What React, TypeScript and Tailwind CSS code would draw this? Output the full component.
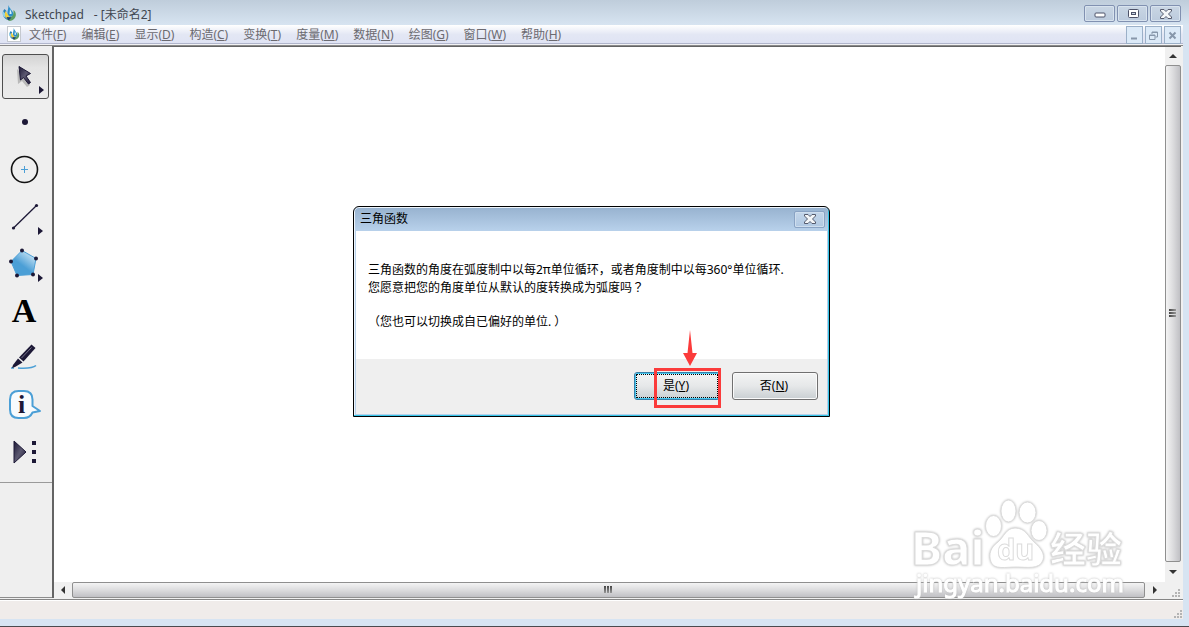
import type { ReactNode } from "react";

const menus = [
  { label: "文件", hotkey: "F" },
  { label: "编辑", hotkey: "E" },
  { label: "显示", hotkey: "D" },
  { label: "构造", hotkey: "C" },
  { label: "变换", hotkey: "T" },
  { label: "度量", hotkey: "M" },
  { label: "数据", hotkey: "N" },
  { label: "绘图", hotkey: "G" },
  { label: "窗口", hotkey: "W" },
  { label: "帮助", hotkey: "H" },
];

function AppIcon({ className }: { className: string }) {
  return (
    <svg viewBox="1 0 14 16" className={className} aria-hidden="true">
      <path d="M3 4 C0 7 1 13 6 15 L8 12 C4 11 4 8 5 6 Z" fill="#2c7fb8" />
      <path d="M1.500 6 L4 9 L4 13 C1 11 .5 9 1.500 6 Z" fill="#8fd0ec" />
      <path d="M7 0 C8 4 12 6 12 9 C12 12 8 13 6 10 C5.500 6 7 4 7 0 Z" fill="#2d8fc9" />
      <path d="M8.500 4 C9 6 10.500 7 10 9 L8 9 Z" fill="#d8eef8" />
      <path d="M4 6 L8 12 L6 14 C3 12 3 9 4 6 Z" fill="#f1cf3a" />
      <path d="M12 5 C16 8 15 15 8 16 L5 14 L8 12 C12 12 12 9 12 5 Z" fill="#5d9e62" />
      <path d="M5 12 L10 12.500 L7 15.500 Z" fill="#1d3f73" />
    </svg>
  );
}

function TitleBar() {
  const button =
    "flex h-[17px] w-[31px] items-center justify-center rounded-xs border border-[#8191b1] bg-linear-to-b from-[#c9d6e4] to-[#bccbdd] shadow-[inset_0_0_0_1px_#d8e3ee]";
  return (
    <header className="flex h-[25px] shrink-0 items-center bg-linear-to-b from-[#bfcddb] to-[#d7e4f1] pr-2 text-[12px] text-[#3f4650]">
      <AppIcon className="ml-0.5 h-4 w-[15px]" />
      <h1 className="ml-2 flex gap-2.5 pt-1 whitespace-pre">
        <span>Sketchpad</span>
        <span>- [未命名2]</span>
      </h1>
      <div className="ml-auto flex gap-0.5 pt-0.5">
        <button className={button} aria-label="最小化">
          <svg width="12" height="11">
            <rect x="1" y="5" width="10" height="4" rx="1" fill="#fff" stroke="#4d5268" />
          </svg>
        </button>
        <button className={button} aria-label="还原">
          <svg width="12" height="11">
            <rect x="1.500" y="1.500" width="10" height="8" rx="1" fill="#fff" stroke="#4d5268" />
            <rect x="4.500" y="4.500" width="4" height="2" fill="#c9d6e4" stroke="#4d5268" />
          </svg>
        </button>
        <button className={button} aria-label="关闭">
          <CloseCross />
        </button>
      </div>
    </header>
  );
}

function CloseCross() {
  return (
    <svg width="12" height="10" viewBox="0 0 12 10">
      <path
        d="M.5 .5 H4 L6 2.500 L8 .5 H11.500 V2 L8.500 5 L11.500 8 V9.500 H8 L6 7.500 L4 9.500 H.5 V8 L3.500 5 L.5 2 Z"
        fill="#f4f6f8"
        stroke="#555a6c"
      />
    </svg>
  );
}

function MenuBar() {
  const button =
    "flex h-[18px] w-[17px] items-center justify-center border border-[#9bb0c8] bg-[#dceaf8]";
  return (
    <div className="flex h-5 shrink-0 items-start border-b border-[#f2f2f4] bg-linear-to-b from-white via-[#e3e7f4] to-[#dfe3f4] text-[12px] text-[#6b6a70] shadow-[inset_0_-1px_0_#b1b6cc]">
      <span className="mt-px ml-[7px] flex h-4 w-[14px] items-center justify-center border border-[#c5c9cf] bg-white">
        <AppIcon className="h-3 w-[11px]" />
      </span>
      <nav className="ml-2 flex gap-[15px]">
        {menus.map((menu) => (
          <button key={menu.hotkey} className="h-[19px] leading-[20px]">
            {menu.label}(<u>{menu.hotkey}</u>)
          </button>
        ))}
      </nav>
      <div className="mt-px mr-0.5 ml-auto flex gap-0.5">
        <button className={button} aria-label="最小化文档">
          <svg width="9" height="9">
            <path d="M1 7.500 H7" stroke="#8797ab" strokeWidth="2" />
          </svg>
        </button>
        <button className={button} aria-label="还原文档">
          <svg width="9" height="9" fill="none" stroke="#8797ab">
            <path d="M3 3 V1 H8.500 V6 H6.500 M3 1.500 H8.500" />
            <path d="M.5 4 H6 V8.500 H.5 Z M.5 4.500 H6" />
          </svg>
        </button>
        <button className={button} aria-label="关闭文档">
          <svg width="9" height="9">
            <path d="M1.500 1.500 L7.500 7.500 M7.500 1.500 L1.500 7.500" stroke="#8797ab" strokeWidth="2" />
          </svg>
        </button>
      </div>
    </div>
  );
}

function Tool({
  name,
  active = false,
  children,
}: {
  name: string;
  active?: boolean;
  children: ReactNode;
}) {
  return (
    <button aria-label={name} aria-pressed={active} className="block h-[47px] w-[52px]">
      <svg width="52" height="47" viewBox="0 0 52 47">
        {children}
      </svg>
    </button>
  );
}

function ToolBox() {
  return (
    <aside className="w-[52px] shrink-0 border-b border-[#8d8d8d] bg-[#efefef] pt-[7px]">
      <div className="border-b border-[#9a9a9a] pb-1.5">
        <Tool name="移动箭头工具" active>
          <defs>
            <linearGradient id="pressed" x2="0" y2="1">
              <stop offset="0" stopColor="#d2d2d2" />
              <stop offset=".3" stopColor="#e4e4e4" />
              <stop offset="1" stopColor="#ebebeb" />
            </linearGradient>
            <linearGradient id="sky" x1=".9" y1="0" x2=".45" y2=".6">
              <stop offset="0" stopColor="#e4f2fb" />
              <stop offset="1" stopColor="#4b9fd6" />
            </linearGradient>
            <linearGradient id="ink" x1="0" x2="1" y2="1">
              <stop offset="0" stopColor="#1c1836" />
              <stop offset=".5" stopColor="#5b5870" />
              <stop offset="1" stopColor="#1c1836" />
            </linearGradient>
          </defs>
          <rect x="2.500" y="1.500" width="46" height="44" rx="2.500" fill="url(#pressed)" stroke="#4e4e4e" />
          <path d="M17 16 L18 31 L22 28 L27 34 L30 32 L26 25 Z" fill="#b9b9b9" />
          <path d="M19 13.500 L20.500 27 L23.500 24.500 L28.500 31 L30.500 29.500 L26 23 L30.500 20.500 Z" fill="url(#ink)" stroke="#1c1836" />
          <path d="M39 33 L44 37 L39 41 Z" fill="#1c1836" />
        </Tool>
        <Tool name="点工具">
          <circle cx="25" cy="22" r="3" fill="#1c1836" />
        </Tool>
        <Tool name="圆工具">
          <circle cx="24.500" cy="22.500" r="13" fill="none" stroke="#111" strokeWidth="1.600" />
          <path d="M21 22.500 H28 M24.500 19 V26" stroke="#4b9fd6" />
        </Tool>
        <Tool name="线段工具">
          <path d="M13.500 34 L36.500 11.500" stroke="#1c1836" strokeWidth="1.300" />
          <circle cx="13.500" cy="34" r="1.600" fill="#1c1836" />
          <circle cx="36.500" cy="11.500" r="1.600" fill="#1c1836" />
          <path d="M38 33 L43 37 L38 41 Z" fill="#1c1836" />
        </Tool>
        <Tool name="多边形工具">
          <path d="M22 9.500 L36 17.500 L33 33.500 L17 34.500 L11 20.500 Z" fill="url(#sky)" stroke="#4b9fd6" />
          <g fill="#1c1836">
            <circle cx="22" cy="9.500" r="2" />
            <circle cx="36" cy="17.500" r="2" />
            <circle cx="33" cy="33.500" r="2" />
            <circle cx="17" cy="34.500" r="2" />
            <circle cx="11" cy="20.500" r="2" />
            <path d="M38 33 L43 37 L38 41 Z" />
          </g>
        </Tool>
        <Tool name="文本工具">
          <text x="24" y="34" textAnchor="middle" className="font-['Liberation_Serif',serif] text-[34px] font-bold">
            A
          </text>
        </Tool>
        <Tool name="标识工具">
          <path d="M11 33 H14 M18 33 C26 33.500 33 33 36 30.500" fill="none" stroke="#4b9fd6" strokeWidth="1.600" />
          <path d="M31.500 9.500 L35.500 13 L23.500 26.500 L19 22.500 Z" fill="#1c1836" />
          <path d="M18 23.500 L22.500 27.500 L15 32 L12 33 L13 30 Z" fill="#1c1836" />
          <path d="M31.500 12.500 L21.500 23" stroke="#77748a" />
        </Tool>
        <Tool name="信息工具">
          <path
            d="M18.500 9 H24 Q32.500 9 32.500 17.500 V24 L40 29 L32.500 30.500 Q30 36 24 36 H18.500 Q10 36 10 27.500 V17.500 Q10 9 18.500 9 Z"
            fill="#f8fbfd"
            stroke="#4b9fd6"
            strokeWidth="2"
            strokeLinejoin="round"
          />
          <text x="21.500" y="31" textAnchor="middle" fill="#1c1836" className="font-['Liberation_Serif',serif] text-[26px] font-bold">
            i
          </text>
        </Tool>
        <Tool name="自定义工具">
          <path d="M14 12 L26 23 L14 34 Z" fill="url(#ink)" stroke="#1c1836" />
          <path d="M32 12 h4 v4 h-4 Z M32 21 h4 v4 h-4 Z M32 30 h4 v4 h-4 Z" fill="#1c1836" />
        </Tool>
      </div>
    </aside>
  );
}

function VerticalScroll() {
  return (
    <div className="flex w-4 shrink-0 flex-col bg-[#f0f0f0]">
      <button aria-label="向上滚动" className="flex h-[18px] items-center justify-center">
        <svg width="8" height="4">
          <path d="M0 4 L4 0 L8 4 Z" fill="#333" />
        </svg>
      </button>
      <div className="flex flex-1 flex-col items-center justify-center gap-px rounded-xs border border-[#8f8f8f] bg-linear-to-r from-[#f4f4f4] via-[#dcdcde] to-[#c0c0c4] pr-0.5 pb-0.5">
        <i className="h-0.5 w-[7px] bg-linear-to-r from-[#444] to-[#999]" />
        <i className="h-0.5 w-[7px] bg-linear-to-r from-[#444] to-[#999]" />
        <i className="h-0.5 w-[7px] bg-linear-to-r from-[#444] to-[#999]" />
      </div>
      <button aria-label="向下滚动" className="flex h-5 items-center justify-center">
        <svg width="8" height="4">
          <path d="M0 0 L4 4 L8 0 Z" fill="#333" />
        </svg>
      </button>
    </div>
  );
}

function HorizontalScroll() {
  return (
    <div className="flex h-4 min-w-0 flex-1 bg-[#f0f0f0]">
      <button aria-label="向左滚动" className="flex w-[18px] items-center justify-center">
        <svg width="4" height="8">
          <path d="M4 0 L0 4 L4 8 Z" fill="#333" />
        </svg>
      </button>
      <div className="flex flex-1 items-center justify-center gap-px rounded-xs border border-[#8f8f8f] bg-linear-to-b from-[#f4f4f4] via-[#dcdcde] to-[#c0c0c4] pr-0.5 pb-0.5">
        <i className="h-[7px] w-0.5 bg-linear-to-b from-[#444] to-[#999]" />
        <i className="h-[7px] w-0.5 bg-linear-to-b from-[#444] to-[#999]" />
        <i className="h-[7px] w-0.5 bg-linear-to-b from-[#444] to-[#999]" />
      </div>
      <button aria-label="向右滚动" className="flex w-5 items-center justify-center">
        <svg width="4" height="8">
          <path d="M0 0 L4 4 L0 8 Z" fill="#333" />
        </svg>
      </button>
    </div>
  );
}

function Grip() {
  return (
    <svg width="10" height="10" fill="#b4b4b4" aria-hidden="true">
      <path d="M7 1h2v2h-2Z M4 4h2v2h-2Z M7 4h2v2h-2Z M1 7h2v2h-2Z M4 7h2v2h-2Z M7 7h2v2h-2Z" />
    </svg>
  );
}

function Dialog() {
  const button =
    "h-7 w-[86px] rounded-[3px] border bg-linear-to-b from-[#f3f4f4] via-[#e6e8e9] to-[#c9cfd2] pr-0.5 leading-[24px]";
  return (
    <div
      role="dialog"
      aria-labelledby="dialog-title"
      className="w-[477px] rounded-t-md border border-black bg-[#b7d0ea] text-[12px] text-black shadow-[inset_-1px_-1px_0_#35c5e8,inset_1px_1px_0_#eef5fc]"
    >
      <div className="m-px flex h-[22px] items-center justify-between rounded-t-[4px] bg-linear-to-b from-[#98b3d0] to-[#b7d0ea] pr-[3px] pl-[5px]">
        <h2 id="dialog-title">三角函数</h2>
        <button
          aria-label="关闭"
          className="flex h-[17px] w-[31px] items-center justify-center rounded-xs border border-[#8aa3c4] bg-linear-to-b from-[#c4d6ea] to-[#b0c8e2] shadow-[inset_0_0_0_1px_#cfdeee]"
        >
          <CloseCross />
        </button>
      </div>
      <div className="mx-0.5 mb-0.5">
        <div className="h-32 bg-white px-3 pt-[30px] leading-[17px] whitespace-nowrap">
          <p>三角函数的角度在弧度制中以每2π单位循环，或者角度制中以每360°单位循环.</p>
          <p>
            您愿意把您的角度单位从默认的度转换成为弧度吗
            <span className="font-['Noto_Sans_CJK_JP',sans-serif]">？</span>
          </p>
          <p className="mt-[17px]">（您也可以切换成自已偏好的单位. ）</p>
        </div>
        <div className="flex h-[55px] justify-end gap-3 bg-[#efefef] pt-[13px] pr-[9px]">
          <div className="relative">
            <button className={`${button} border-[#3a7fa8] shadow-[inset_0_0_0_1px_#45c8f0] outline-1 -outline-offset-3 outline-dotted outline-black`}>
              是(<u>Y</u>)
            </button>
            <div className="pointer-events-none absolute -top-1 left-5 h-10 w-[67px] border-3 border-[#fb3b3b]" />
            <svg width="14" height="36" className="pointer-events-none absolute -top-[42px] left-[49px]">
              <path d="M7 0 L9.500 23 H14 L7 36 L0 23 H4.500 Z" fill="#fb3b3b" />
            </svg>
          </div>
          <button className={`${button} border-[#707070] shadow-[inset_0_0_0_1px_#fafafa]`}>
            否(<u>N</u>)
          </button>
        </div>
      </div>
    </div>
  );
}

function Watermark() {
  return (
    <svg
      width="225"
      height="105"
      className="pointer-events-none absolute right-[59px] bottom-6 font-['Noto_Sans','Noto_Sans_CJK_SC',sans-serif] [filter:drop-shadow(0_0_1px_#bbb)]"
      fill="#fff"
      stroke="#dcdcdc"
    >
      <text x="6" y="68" className="text-[47px] font-bold">
        Bai
      </text>
      <ellipse cx="88.500" cy="29" rx="8" ry="10.500" />
      <ellipse cx="103.500" cy="14" rx="7.500" ry="11" />
      <ellipse cx="122.500" cy="15.500" rx="8.500" ry="10.500" />
      <ellipse cx="134" cy="33.500" rx="8" ry="10" />
      <path d="M110 31 C121 31 123 40 129 45 C136 51 140 57 138 63 C135 73 121 70 111 70 C101 70 89 73 86 65 C83 57 86 50 93 45 C99 40 101 31 110 31 Z" />
      <text x="92" y="63" className="text-[29px] font-bold">
        du
      </text>
      <text x="145" y="66" className="text-[36px] font-bold">
        经验
      </text>
      <text x="11" y="95" stroke="#fff" className="text-[24px]">
        jingyan.baidu.com
      </text>
    </svg>
  );
}

function App() {
  return (
    <div className="relative flex h-screen flex-col border-b border-[#4a4a4e] bg-[#d7e4f2] font-['Noto_Sans','Noto_Sans_CJK_SC',sans-serif]">
      <TitleBar />
      <div className="mr-1.5 mb-[7px] flex min-h-0 flex-1 flex-col bg-[#f0f0f0]">
        <MenuBar />
        <main className="flex min-h-0 flex-1 border-t border-[#8a8a8a] pr-0.5">
          <ToolBox />
          <div className="flex min-w-0 flex-1 flex-col border-t border-l-2 border-[#646464]">
            <div className="flex min-h-0 flex-1">
              <div className="flex-1 bg-white" />
              <VerticalScroll />
            </div>
            <div className="flex shrink-0">
              <HorizontalScroll />
              <div className="flex h-4 w-4 items-end justify-end">
                <Grip />
              </div>
            </div>
          </div>
        </main>
        <footer className="mt-px flex h-5 shrink-0 items-end justify-end border-t border-[#858585] bg-[#f0ecea] shadow-[inset_0_1px_0_#fff]">
          <Grip />
        </footer>
      </div>
      <div className="absolute inset-0 flex items-center justify-center pr-1.5 pb-[3px]">
        <Dialog />
      </div>
      <Watermark />
    </div>
  );
}

export default App;
